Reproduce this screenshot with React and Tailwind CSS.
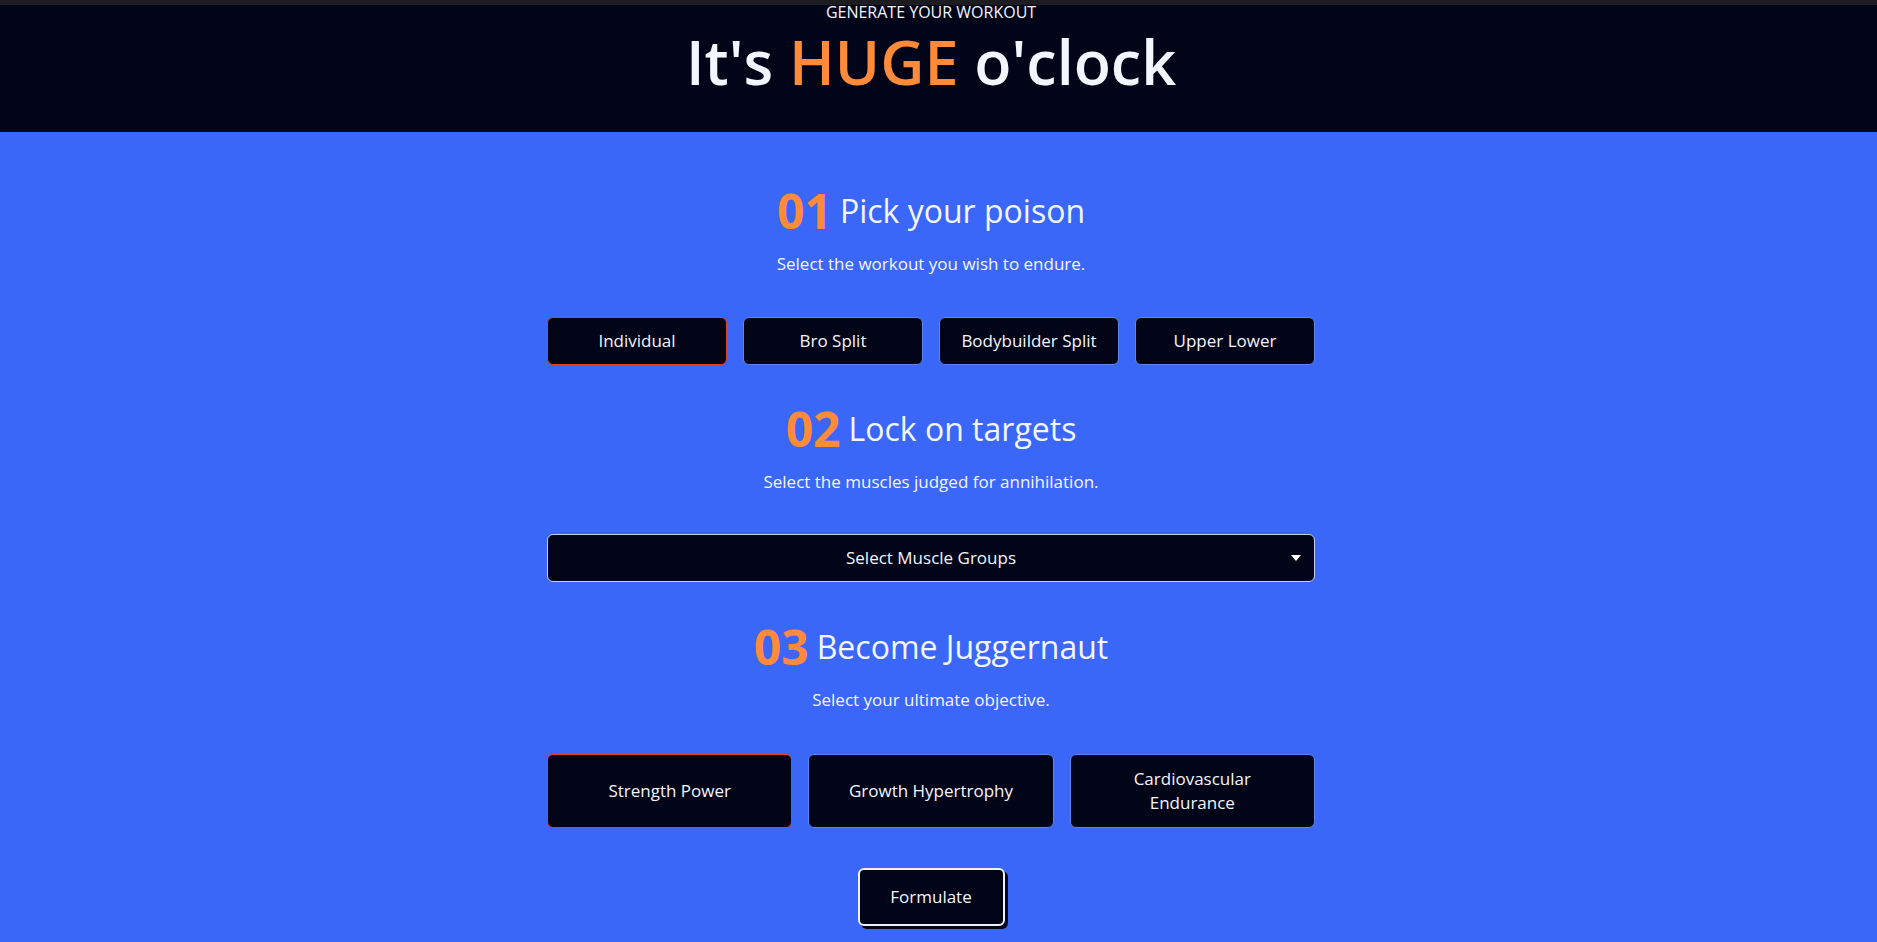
import { useState } from 'react'

const SPLITS = ['Individual', 'Bro Split', 'Bodybuilder Split', 'Upper Lower']
const GOALS = ['Strength Power', 'Growth Hypertrophy', 'Cardiovascular Endurance']

const SectionHeader = ({ index, title, description }) => (
  <div className="flex flex-col items-center">
    <div className="flex items-center gap-2">
      <span className="text-[48px] leading-none font-bold text-[#ff8a3a]">{index}</span>
      <h2 className="text-[32px] leading-none font-normal">{title}</h2>
    </div>
    <p className="mt-[17px] text-[17px] leading-6">{description}</p>
  </div>
)

export default function App() {
  const [split, setSplit] = useState('Individual')
  const [goal, setGoal] = useState('Strength Power')

  return (
    <div className="min-h-screen bg-[#3a67f7] text-[#f4f6ff] font-['Open_Sans',sans-serif]">
      {/* Hero */}
      <header className="bg-[#020418] border-t-[5px] border-[#1c1c21] pb-[40px] pr-[15px] flex flex-col items-center">
        <p className="text-[16px] leading-[14px] font-medium uppercase">Generate your workout</p>
        <h1 className="mt-[12px] text-[61px] leading-[61px] font-semibold">
          It's <span className="text-[#ff8a3a]">HUGE</span> o'clock
        </h1>
      </header>

      <main className="pr-[15px] pt-[55px] pb-[10px]">
        <div className="max-w-3xl mx-auto flex flex-col items-stretch">
          {/* 01 */}
          <SectionHeader index="01" title="Pick your poison" description="Select the workout you wish to endure." />
          <div className="mt-[41px] grid grid-cols-4 gap-4">
            {SPLITS.map(s => (
              <button
                key={s}
                onClick={() => setSplit(s)}
                className={`h-12 rounded-md border bg-[#020418] text-[17px] ${split === s ? 'border-[#ef3b16]' : 'border-[#5a86f5]'}`}
              >
                {s}
              </button>
            ))}
          </div>

          {/* 02 */}
          <div className="mt-10">
            <SectionHeader index="02" title="Lock on targets" description="Select the muscles judged for annihilation." />
          </div>
          <button className="mt-[40px] h-12 w-full rounded-md border border-[#c6d0f4] bg-[#020418] flex items-center text-[17px]">
            <span className="w-[34px]" />
            <span className="flex-1 text-center">Select Muscle Groups</span>
            <span className="w-[34px] flex justify-start pl-[11px]">
              <svg width="10" height="7" viewBox="0 0 10 7"><path d="M0 0h10L5 6z" fill="#fff" /></svg>
            </span>
          </button>

          {/* 03 */}
          <div className="mt-[41px]">
            <SectionHeader index="03" title="Become Juggernaut" description="Select your ultimate objective." />
          </div>
          <div className="mt-[42px] grid grid-cols-3 gap-4">
            {GOALS.map(g => (
              <button
                key={g}
                onClick={() => setGoal(g)}
                className={`min-h-[72px] rounded-md border bg-[#020418] px-6 py-3 text-[17px] leading-6 ${goal === g ? 'border-[#ef3b16]' : 'border-[#5a86f5]'}`}
              >
                {g}
              </button>
            ))}
          </div>

          <div className="mt-[40px] flex justify-center">
            <button className="w-[147px] h-[58px] rounded-md border-2 border-[#eef1fa] bg-[#020418] text-[17px] shadow-[3px_3px_0_#020418]">
              Formulate
            </button>
          </div>
        </div>
      </main>
    </div>
  )
}
